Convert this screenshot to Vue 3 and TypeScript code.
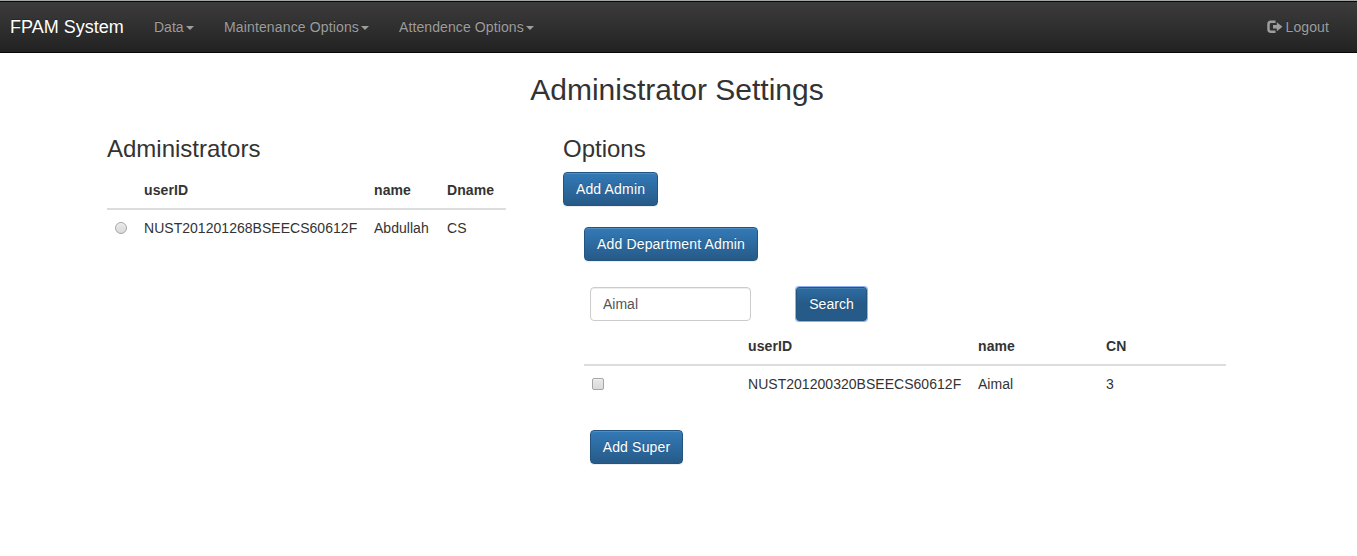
<script setup lang="ts">
import { ref } from 'vue'

interface Person { id: string; name: string; extra: string }

const menus: { label: string; cls: string }[] = [
  { label: 'Data', cls: 'm-data' },
  { label: 'Maintenance Options', cls: 'm-maint' },
  { label: 'Attendence Options', cls: 'm-att' },
]
const admins: Person[] = [{ id: 'NUST201201268BSEECS60612F', name: 'Abdullah', extra: 'CS' }]
const results: Person[] = [{ id: 'NUST201200320BSEECS60612F', name: 'Aimal', extra: '3' }]
const query = ref('Aimal')
</script>

<template>
  <div class="page">
    <nav class="navbar">
      <a class="brand">FPAM System</a>
      <ul class="menu">
        <li v-for="m in menus" :key="m.label" :class="m.cls"><span>{{ m.label }}</span><b class="caret"></b></li>
      </ul>
      <a class="logout">
        <svg width="16" height="14" viewBox="0 0 16 14">
          <path d="M8.500 1.700H4Q1.500 1.700 1.500 4.200V9.300Q1.500 11.800 4 11.800H8.500" fill="none" stroke="currentColor" stroke-width="2.500" />
          <path d="M6 5H9.800V2.300L15.500 6.700L9.800 11.200V8.500H6Z" fill="currentColor" />
        </svg>
        <span>Logout</span>
      </a>
    </nav>
    <h2>Administrator Settings</h2>
    <main class="columns">
      <section class="admins">
        <h3>Administrators</h3>
        <table>
          <colgroup><col class="a1" /><col class="a2" /><col class="a3" /><col /></colgroup>
          <thead><tr><th></th><th>userID</th><th>name</th><th>Dname</th></tr></thead>
          <tbody>
            <tr v-for="p in admins" :key="p.id">
              <td><input type="radio" class="tick round" name="admin" /></td>
              <td>{{ p.id }}</td><td>{{ p.name }}</td><td>{{ p.extra }}</td>
            </tr>
          </tbody>
        </table>
      </section>
      <section class="options">
        <h3>Options</h3>
        <button class="btn b-admin">Add Admin</button>
        <div class="panel">
          <button class="btn b-dept">Add Department Admin</button>
          <div class="search">
            <input v-model="query" class="field" type="text" />
            <button class="btn b-search active">Search</button>
          </div>
          <table>
            <colgroup><col class="r1" /><col class="r2" /><col class="r3" /><col /></colgroup>
            <thead><tr><th></th><th>userID</th><th>name</th><th>CN</th></tr></thead>
            <tbody>
              <tr v-for="p in results" :key="p.id">
                <td><input type="checkbox" class="tick" /></td>
                <td>{{ p.id }}</td><td>{{ p.name }}</td><td>{{ p.extra }}</td>
              </tr>
            </tbody>
          </table>
          <button class="btn b-super">Add Super</button>
        </div>
      </section>
    </main>
  </div>
</template>

<style>
body { margin: 0; background: #fff; }
</style>

<style scoped>
.page, .page * { box-sizing: border-box; }
.page {
  height: 556px;
  overflow: hidden;
  border-top: 1px solid #a3a7a3;
  font: 14px/20px "Liberation Sans", Arial, sans-serif;
  color: #333;
}
.navbar {
  height: 52px;
  display: flex;
  align-items: center;
  border: solid #080808;
  border-width: 1px 0;
  background: linear-gradient(#3c3c3c, #222);
  color: #9d9d9d;
  text-shadow: 0 -1px 0 rgba(0, 0, 0, .25);
  padding: 0 28px 0 10px;
}
.brand { color: #fff; font-size: 18px; width: 144px; white-space: nowrap; }
.menu { display: flex; list-style: none; margin: 0; padding: 0; }
.menu li { display: flex; align-items: center; white-space: nowrap; }
.m-data { width: 70px; }
.m-maint { width: 175px; letter-spacing: .14px; }
.m-att { letter-spacing: .1px; }
.caret {
  margin: 1px 0 0 2px;
  border-top: 4px solid;
  border-left: 4px solid transparent;
  border-right: 4px solid transparent;
}
.logout { margin-left: auto; display: flex; align-items: center; gap: 3px; letter-spacing: .1px; }
h2, h3 { font-weight: 400; }
h2 { font-size: 30px; line-height: 33px; text-align: center; margin: 20px 3px 0 0; }
h3 { font-size: 24px; line-height: 26px; margin: 0 0 10px; }
.columns { display: flex; margin: 30px 0 0 107px; }
.admins { width: 399px; margin-right: 57px; }
.options { width: 663px; }
table { width: 100%; table-layout: fixed; border-collapse: separate; border-spacing: 0; }
th, td { text-align: left; padding: 8px; height: 36px; line-height: 20px; white-space: nowrap; }
td { letter-spacing: .03px; }
th { height: 38px; border-bottom: 2px solid #ddd; letter-spacing: .1px; }
.a1 { width: 29px; }
.a2 { width: 230px; }
.a3 { width: 73px; }
.r1 { width: 156px; }
.r2 { width: 230px; }
.r3 { width: 128px; }
.tick {
  appearance: none;
  display: block;
  width: 12px;
  height: 12px;
  margin: 0;
  border: 1px solid #a5a5a5;
  border-radius: 2px;
  background: linear-gradient(#e8e8e8, #dadada);
  box-shadow: inset 0 1px 1px #f3f3f3;
}
.round { border-radius: 50%; }
.btn {
  display: block;
  height: 34px;
  padding: 0;
  border: 1px solid #245580;
  border-radius: 4px;
  background: linear-gradient(#337ab7, #265a88);
  box-shadow: inset 0 1px 0 rgba(255, 255, 255, .15), 0 1px 1px rgba(0, 0, 0, .075);
  color: #fff;
  font: inherit;
  letter-spacing: .17px;
  text-shadow: 0 -1px 0 rgba(0, 0, 0, .2);
  white-space: nowrap;
}
.b-admin { width: 95px; }
.b-dept { width: 174px; }
.b-search { width: 71px; letter-spacing: .05px; }
.b-super { width: 93px; margin: 28px 0 0 6px; }
.active {
  border-radius: 3px;
  background: linear-gradient(#2d6ca2, #265a88 50%);
  box-shadow: inset 0 1px 0 rgba(255, 255, 255, .1), 0 0 0 1px #8fb3f2;
}
.panel { margin: 21px 0 0 21px; width: 642px; }
.search { display: flex; gap: 45px; margin: 26px 0 7px 6px; }
.field {
  width: 161px;
  height: 34px;
  padding: 6px 12px;
  border: 1px solid #ccc;
  border-radius: 4px;
  box-shadow: inset 0 1px 1px rgba(0, 0, 0, .075);
  color: #555;
  font: inherit;
  outline: none;
}
</style>
